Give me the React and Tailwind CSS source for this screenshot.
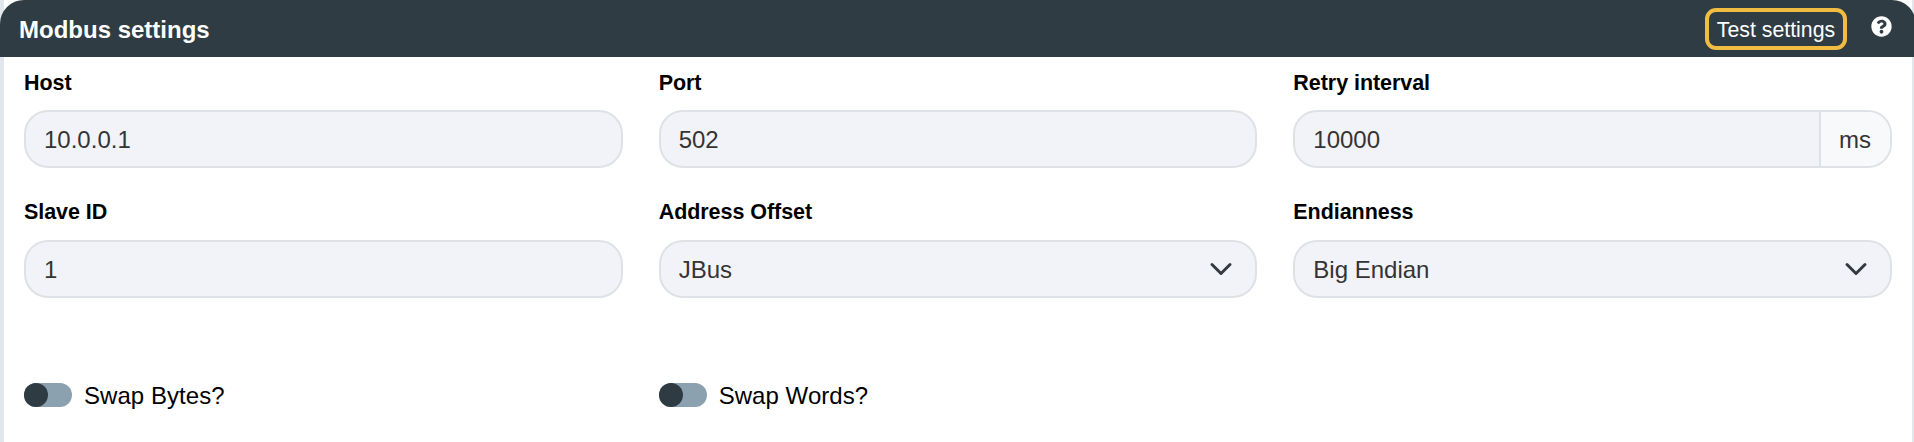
import { FaQuestionCircle } from "react-icons/fa";

function Label({ children, className = "pt-0" }) {
  return (
    <label className={`block h-8 text-[21.5px] leading-8 font-bold tracking-[-0.05px] text-black ${className}`}>
      {children}
    </label>
  );
}

function TextField({ label, value, unit, labelClass }) {
  return (
    <div>
      <Label className={labelClass}>{label}</Label>
      <div className="mt-3 flex h-[58px] overflow-hidden rounded-[24px] border-2 border-[#dee2e6] bg-[#f2f3f8] text-2xl leading-[56px] text-[#343434]">
        <span className="flex-1 px-[18px]">{value}</span>
        {unit && (
          <span className="w-[71px] border-l-2 border-[#dee2e6] bg-[#f8f9fa] pl-[18px]">
            {unit}
          </span>
        )}
      </div>
    </div>
  );
}

function SelectField({ label, value }) {
  return (
    <div>
      <Label>{label}</Label>
      <div className="mt-3 flex h-[58px] justify-between rounded-[24px] border-2 border-[#dee2e6] bg-[#f2f3f8] pr-[22px] pl-[18px] text-2xl leading-[56px] text-[#343434]">
        <span>{value}</span>
        <svg viewBox="0 0 16 16" className="mt-[15px] size-6" fill="none" stroke="#343a40" strokeWidth="2" strokeLinecap="round" strokeLinejoin="round">
          <path d="m2 5 6 6 6-6" />
        </svg>
      </div>
    </div>
  );
}

function Toggle({ label }) {
  return (
    <div className="flex h-9 items-center gap-3">
      <span className="flex h-6 w-12 rounded-full bg-[#8ca1af]">
        <span className="size-6 rounded-full bg-[#2e3b43]" />
      </span>
      <span className="pt-0.5 text-2xl leading-9 tracking-[0.05px] text-black">{label}</span>
    </div>
  );
}

export default function App() {
  return (
    <div className="h-[442px] w-[1914px] overflow-hidden">
      <div className="h-full border-r-2 border-l-4 border-[#e1e7ec] bg-white font-['Liberation_Sans',Arial,sans-serif]">
        <header className="-mr-1 -ml-1 flex h-[57px] items-center justify-between rounded-t-[24px] bg-[#303c44] pr-6 pl-[19px] text-white">
          <h1 className="pt-0.5 text-2xl leading-8 font-bold">Modbus settings</h1>
          <div className="flex items-center gap-6">
            <button className="mt-px h-[42px] w-[142px] rounded-[11px] border-4 border-[#f0bc41] pt-px text-[21.3px] leading-[34px] whitespace-nowrap">
              Test settings
            </button>
            <FaQuestionCircle className="-mt-1 size-[21px]" />
          </div>
        </header>
        <main className="pt-[9px] pr-5 pl-5">
          <div className="grid grid-cols-3 gap-x-9 gap-y-7">
            <TextField label="Host" value="10.0.0.1" labelClass="pt-px" />
            <TextField label="Port" value="502" labelClass="pt-px" />
            <TextField label="Retry interval" value="10000" unit="ms" labelClass="pt-px" />
            <TextField label="Slave ID" value="1" />
            <SelectField label="Address Offset" value="JBus" />
            <SelectField label="Endianness" value="Big Endian" />
          </div>
          <div className="mt-[79px] grid grid-cols-3 gap-x-9">
            <Toggle label="Swap Bytes?" />
            <Toggle label="Swap Words?" />
          </div>
        </main>
      </div>
    </div>
  );
}
